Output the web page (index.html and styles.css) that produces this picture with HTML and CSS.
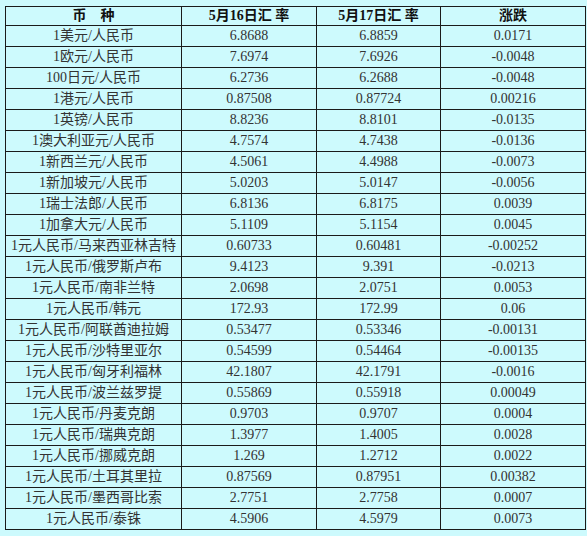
FILE: index.html
```html
<!DOCTYPE html>
<html lang="zh">
<head>
<meta charset="utf-8">
<title>汇率</title>
<link rel="stylesheet" href="styles.css">
</head>
<body>
<table class="rates">
  <colgroup>
    <col class="c1"><col class="c2"><col class="c3"><col class="c4">
  </colgroup>
  <thead>
    <tr class="head"><th>币&nbsp;&nbsp;&nbsp;&nbsp;种</th><th>5月16日汇 率</th><th>5月17日汇 率</th><th>涨跌</th></tr>
  </thead>
  <tbody>
    <tr><td>1美元/人民币</td><td>6.8688</td><td>6.8859</td><td>0.0171</td></tr>
    <tr><td>1欧元/人民币</td><td>7.6974</td><td>7.6926</td><td>-0.0048</td></tr>
    <tr><td>100日元/人民币</td><td>6.2736</td><td>6.2688</td><td>-0.0048</td></tr>
    <tr><td>1港元/人民币</td><td>0.87508</td><td>0.87724</td><td>0.00216</td></tr>
    <tr><td>1英镑/人民币</td><td>8.8236</td><td>8.8101</td><td>-0.0135</td></tr>
    <tr><td>1澳大利亚元/人民币</td><td>4.7574</td><td>4.7438</td><td>-0.0136</td></tr>
    <tr><td>1新西兰元/人民币</td><td>4.5061</td><td>4.4988</td><td>-0.0073</td></tr>
    <tr><td>1新加坡元/人民币</td><td>5.0203</td><td>5.0147</td><td>-0.0056</td></tr>
    <tr><td>1瑞士法郎/人民币</td><td>6.8136</td><td>6.8175</td><td>0.0039</td></tr>
    <tr><td>1加拿大元/人民币</td><td>5.1109</td><td>5.1154</td><td>0.0045</td></tr>
    <tr><td>1元人民币/马来西亚林吉特</td><td>0.60733</td><td>0.60481</td><td>-0.00252</td></tr>
    <tr><td>1元人民币/俄罗斯卢布</td><td>9.4123</td><td>9.391</td><td>-0.0213</td></tr>
    <tr><td>1元人民币/南非兰特</td><td>2.0698</td><td>2.0751</td><td>0.0053</td></tr>
    <tr><td>1元人民币/韩元</td><td>172.93</td><td>172.99</td><td>0.06</td></tr>
    <tr><td>1元人民币/阿联酋迪拉姆</td><td>0.53477</td><td>0.53346</td><td>-0.00131</td></tr>
    <tr><td>1元人民币/沙特里亚尔</td><td>0.54599</td><td>0.54464</td><td>-0.00135</td></tr>
    <tr><td>1元人民币/匈牙利福林</td><td>42.1807</td><td>42.1791</td><td>-0.0016</td></tr>
    <tr><td>1元人民币/波兰兹罗提</td><td>0.55869</td><td>0.55918</td><td>0.00049</td></tr>
    <tr><td>1元人民币/丹麦克朗</td><td>0.9703</td><td>0.9707</td><td>0.0004</td></tr>
    <tr><td>1元人民币/瑞典克朗</td><td>1.3977</td><td>1.4005</td><td>0.0028</td></tr>
    <tr><td>1元人民币/挪威克朗</td><td>1.269</td><td>1.2712</td><td>0.0022</td></tr>
    <tr><td>1元人民币/土耳其里拉</td><td>0.87569</td><td>0.87951</td><td>0.00382</td></tr>
    <tr><td>1元人民币/墨西哥比索</td><td>2.7751</td><td>2.7758</td><td>0.0007</td></tr>
    <tr><td>1元人民币/泰铢</td><td>4.5906</td><td>4.5979</td><td>0.0073</td></tr>
  </tbody>
</table>
</body>
</html>
```
FILE: styles.css
```css
html, body {
  margin: 0;
  padding: 0;
  background: #cdfafd;
}
body {
  padding: 6px 0 0 5px;
  font-family: "Liberation Serif", "Noto Sans CJK SC", serif;
  font-size: 14px;
  color: #333;
}
.rates {
  border-collapse: collapse;
  table-layout: fixed;
  width: 580px;
}
.c1 { width: 176px; }
.c2 { width: 135px; }
.c3 { width: 124px; }
.c4 { width: 145px; }
.rates th, .rates td {
  border: 1px solid #1a1a1a;
  padding: 0;
  text-align: center;
  vertical-align: middle;
  line-height: 16px;
  white-space: nowrap;
  overflow: hidden;
}
.rates th {
  font-weight: bold;
  color: #111;
}
.rates tr.head { height: 19px; }
.rates tbody tr { height: 21px; }
```
